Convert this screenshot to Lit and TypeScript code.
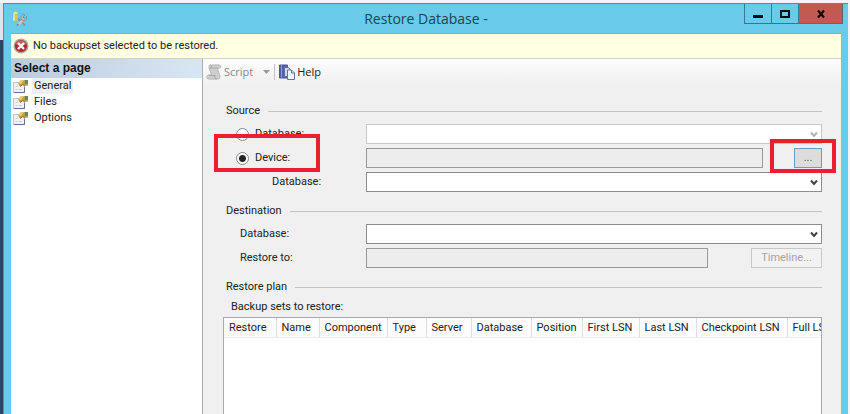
import { LitElement, html, css, svg } from "lit";
import { customElement } from "lit/decorators.js";

const chevron = svg`<path d="M1 1.5 L4 5 L7 1.5" fill="none" stroke="currentColor" stroke-width="2"/>`;

@customElement("combo-box")
class ComboBox extends LitElement {
  static properties = {
    label: { type: String },
    disabled: { type: Boolean, reflect: true },
  };
  declare label: string;
  declare disabled: boolean;

  static styles = css`
    :host { display: grid; height: 20px; color: #444; }
    :host([disabled]) { color: #b4b4b4; }
    select {
      grid-area: 1 / 1; appearance: none; width: 100%; height: 20px; margin: 0;
      padding: 0 20px 0 4px; border: 1px solid #8c8c8c; border-radius: 0;
      background: #fff; font: 11px Roboto, sans-serif;
    }
    select:disabled { border-color: #c8c8c8; opacity: 1; }
    svg { grid-area: 1 / 1; place-self: center end; margin-right: 4px; pointer-events: none; }
  `;

  render() {
    return html`
      <select aria-label=${this.label} ?disabled=${this.disabled}><option></option></select>
      <svg width="8" height="7" viewBox="0 0 8 7" aria-hidden="true">${chevron}</svg>
    `;
  }
}

const appIcon = html`<svg width="16" height="17" viewBox="0 0 16 17" aria-hidden="true">
  <path d="M1 3v7c0 1 5 1 5 0V3z" fill="#f0bd3e"/>
  <path d="M1 3v7c0 .6 1.5 .8 2 .8V3z" fill="#fbe490"/>
  <ellipse cx="3.5" cy="3" rx="2.5" ry="1.2" fill="#fff0a8" stroke="#d9a233" stroke-width=".5"/>
  <path d="M7 3.5h4M11 3.5l2 2M4 12v2" fill="none" stroke="#75cf8b" stroke-width="1"/>
  <path d="M6 8.5l7 7" stroke="#8f9392" stroke-width="2"/>
  <path d="M6 15l6-6" stroke="#c3cccb" stroke-width="2.4"/>
  <path d="M14.5 6.5l-2 2-1.5-1.5 2-2a3 3 0 1 0 1.5 1.5z" fill="#b3bbba" stroke="#777f80" stroke-width=".7"/>
  <path d="M5 15.5l1.5-1.5" stroke="#717b7d" stroke-width="1.4"/>
</svg>`;

const errorIcon = html`<svg width="16" height="16" viewBox="0 0 16 16" aria-hidden="true">
  <circle cx="8" cy="8" r="6.800" fill="#b6262c" stroke="#a9aaa8" stroke-width="1.400"/>
  <path d="M2.600 6a5.800 5.800 0 0 1 10.800 0c-3 2-7.800 2-10.800 0z" fill="#d05a5c"/>
  <path d="M5 5l6 6M11 5l-6 6" stroke="#fff" stroke-width="2.400"/>
</svg>`;

const pageIcon = html`<svg width="16" height="14" viewBox="0 0 16 14" aria-hidden="true">
  <rect x=".5" y="3.500" width="11" height="10" fill="#eef1f9" stroke="#c3c9d8"/>
  <path d="M1 13.500h10.500V8" fill="none" stroke="#66718c"/>
  <path d="M2.500 7.500h2M2.500 10.500h2M6 10.500h3" stroke="#c4cadb"/>
  <path d="M5 4.500l3-3.500h5l2 2v3.500l-4 .5-1.500-1.500L7 7.500z" fill="#c99b3a"/>
  <path d="M5 4.500l3-3.500h3l-3 4z" fill="#e6cd7c"/>
  <path d="M12 1h3v4h-3z" fill="#6f8a45"/>
  <path d="M7 7.500l3-2 2 1.500" fill="none" stroke="#8f7a4c"/>
</svg>`;

const scriptIcon = html`<svg width="16" height="16" viewBox="0 0 16 16" aria-hidden="true">
  <path d="M4 1h9c2 0 2.500 3 .5 3H12c-1 3 2 6 2 8.500 0 1.500-1 2.500-2 2.500H3c-3 0-3-4 0-4h2c1-2-2-5-2-7.500C3 2 3.300 1 4 1z" fill="#cfcfcf" stroke="#b4b4b4"/>
  <path d="M4 1.500c2 0 2 2.500 0 2.500h8M3 11.500h6.500c-1.500 1-.5 3.500 1 3.500" fill="none" stroke="#a6a6a6"/>
</svg>`;

const helpIcon = html`<svg width="16" height="16" viewBox="0 0 16 16" aria-hidden="true">
  <path d="M.5 1h8v13h-8z" fill="#5260a8" stroke="#4c5796"/>
  <path d="M2.500 1v13" stroke="#8f9bd4"/>
  <path d="M5.500 3.500h4l2 2v7h-6z" fill="#cdd8ef" stroke="#63709f"/>
  <path d="M8.500 6h4l3 3v6.500h-7z" fill="#f4f8fd" stroke="#60779b"/>
  <path d="M12.500 6v3h3" fill="#bfcfe2" stroke="#60779b"/>
</svg>`;

const columns: [string, string][] = [
  ["Restore", "w52"], ["Name", "w43"], ["Component", "w68"], ["Type", "w39"],
  ["Server", "w45"], ["Database", "w60"], ["Position", "w51"], ["First LSN", "w57"],
  ["Last LSN", "w57"], ["Checkpoint LSN", "w91"], ["Full LSN", "w60"],
];

@customElement("app-root")
class AppRoot extends LitElement {
  static styles = css`
    * { box-sizing: border-box; }
    :host {
      display: flex; min-height: 100vh; padding: 3px 2px 0 0; background: #f4f4f6;
      font: 11px/16px Roboto, sans-serif; color: #222;
    }
    button, input { font: inherit; color: inherit; margin: 0; border-radius: 0; }
    svg { display: block; flex: none; }
    .backdrop { width: 3px; flex: none; background: linear-gradient(#e2e4ea 37px, #2f4467 37px); }
    .window {
      flex: 1; min-width: 0; display: flex; flex-direction: column; background: #69cbe8;
      border: solid #4f8ea5; border-width: 1px 0 0 1px; padding: 0 7px;
    }
    .titlebar { display: grid; grid-template-columns: 1fr auto 1fr; height: 29px; }
    .app-icon { padding: 6px 0 0 1px; }
    h1 { margin: 0; font: 14px/29px "Open Sans", sans-serif; color: #17455a; }
    .window-buttons { justify-self: end; display: flex; height: 20px; margin-right: -2px; }
    .window-buttons button {
      width: 27px; padding: 0; display: grid; place-items: center; color: #0a0a0a;
      background: none; border: 1px solid #38788e; border-top: 0; border-right: 0;
    }
    .window-buttons .close { width: 45px; background: #c35a52; border-right: 1px solid #5d6468; }
    .client { flex: 1; display: flex; flex-direction: column; background: #f0f0f0; border-top: 1px solid #98a7a8; }
    .alert {
      display: flex; align-items: center; gap: 4px; height: 25px; padding-left: 2px;
      background: #ffffe1; border-bottom: 1px solid #d3d3c5; white-space: nowrap;
    }
    .body { flex: 1; display: flex; }
    aside { width: 192px; flex: none; background: #fff; border-right: 1px solid #a8adb2; }
    h2 {
      margin: 0; padding: 0 3px; font: bold 12px/19px "Liberation Sans", sans-serif; color: #111;
      background: linear-gradient(90deg, #bccbdd, #d8e6f4);
    }
    nav a { display: flex; align-items: center; gap: 3px; height: 16px; padding-left: 2px; color: inherit; text-decoration: none; }
    nav span { padding: 0 2px; }
    nav .current span { background: #efeff3; }
    main { flex: 1; min-width: 0; display: flex; flex-direction: column; }
    .toolbar {
      display: flex; align-items: center; height: 25px; padding-left: 3px;
      background: linear-gradient(#fdfdfd, #f0f0f0); font: 11px/24px "Open Sans", sans-serif;
    }
    .toolbar button { display: flex; align-items: center; gap: 2px; padding: 0; border: 0; background: none; }
    .toolbar button:disabled { color: #8a8a8a; }
    .toolbar .arrow { margin-left: 8px; }
    .divider { width: 1px; height: 16px; margin: 0 4px; background: #c6c6c6; }
    .form { flex: 1; display: flex; flex-direction: column; padding: 19px 19px 0 23px; }
    section { display: grid; grid-template-columns: 140px 1fr; row-gap: 4px; margin-bottom: 11px; }
    h3 {
      grid-column: 1 / -1; display: flex; align-items: center; gap: 8px;
      margin: 0 0 1px; font: inherit;
    }
    h3::after { content: ""; flex: 1; height: 1px; background: #c4c4c4; }
    .label { display: flex; align-items: center; height: 20px; padding-left: 14px; white-space: nowrap; }
    .label.nested { padding-left: 46px; }
    .radio { display: flex; align-items: center; gap: 6px; height: 20px; padding-left: 10px; position: relative; }
    .radio input {
      appearance: none; width: 13px; height: 13px; border: 1px solid #888; border-radius: 50%; background: #fff;
    }
    .radio input:checked { background: radial-gradient(circle, #222 3px, #fff 4px); }
    .line { display: flex; justify-content: space-between; position: relative; }
    .line input { flex: 1; min-width: 0; height: 20px; padding: 0 4px; border: 1px solid #999; background: #ededed; }
    .line button { width: 28px; height: 20px; margin-left: 31px; padding: 0; border: 1px solid #6c9dbc; background: #dcdcdc; color: #555; }
    .line .timeline { width: 71px; margin-left: 43px; border-color: #c8c8c8; background: #f2f2f2; color: #a5a5a5; }
    .mark { position: absolute; border: 4px solid #e8202f; pointer-events: none; }
    .mark-device { inset: -14px 46px -4px -12px; }
    .mark-browse { width: 66px; top: -9px; bottom: -5px; right: -14px; }
    .plan { row-gap: 3px; margin-bottom: 0; }
    .caption { grid-column: 1 / -1; padding-left: 5px; }
    .list {
      flex: 1; margin: 2px 0 0 -3px; overflow: hidden; background: #fff;
      border: 1px solid #a9a9b0; border-bottom: 0;
    }
    .form .list { width: calc(100% + 3px); }
    table { table-layout: fixed; width: 623px; border-collapse: collapse; }
    th {
      height: 19px; padding: 1px 0 0 5px; text-align: left; font-weight: normal; white-space: nowrap;
      border-right: 1px solid #dedede; border-bottom: 1px solid #ededed; background: #fcfcfd;
    }
    .w39 { width: 39px; } .w43 { width: 43px; } .w45 { width: 45px; } .w51 { width: 51px; }
    .w52 { width: 52px; } .w57 { width: 57px; } .w60 { width: 60px; } .w68 { width: 68px; } .w91 { width: 91px; }
  `;

  render() {
    return html`
      <div class="backdrop"></div>
      <div class="window">
        <header class="titlebar">
          <div class="app-icon">${appIcon}</div>
          <h1>Restore Database -</h1>
          <div class="window-buttons">
            <button aria-label="Minimize"><svg width="10" height="10" viewBox="0 0 10 10"><path d="M0 6h10v3H0z" fill="currentColor"/></svg></button>
            <button aria-label="Maximize"><svg width="10" height="10" viewBox="0 0 10 10"><path d="M1 2h8v6H1z" fill="none" stroke="currentColor" stroke-width="2"/></svg></button>
            <button class="close" aria-label="Close"><svg width="10" height="10" viewBox="0 0 10 10"><path d="M2 1.500l6 7M8 1.500l-6 7" stroke="currentColor" stroke-width="2.200"/></svg></button>
          </div>
        </header>
        <div class="client">
          <div class="alert" role="alert">${errorIcon}<span>No backupset selected to be restored.</span></div>
          <div class="body">
            <aside>
              <h2>Select a page</h2>
              <nav>
                <a href="#general" class="current">${pageIcon}<span>General</span></a>
                <a href="#files">${pageIcon}<span>Files</span></a>
                <a href="#options">${pageIcon}<span>Options</span></a>
              </nav>
            </aside>
            <main>
              <div class="toolbar">
                <button disabled>${scriptIcon}Script
                  <svg class="arrow" width="7" height="4" viewBox="0 0 7 4"><path d="M0 0h7L3.500 4z" fill="#999"/></svg>
                </button>
                <span class="divider"></span>
                <button>${helpIcon}Help</button>
              </div>
              <div class="form">
                <section>
                  <h3>Source</h3>
                  <label class="radio"><input type="radio" name="source" />Database:</label>
                  <combo-box label="Source database" disabled></combo-box>
                  <label class="radio"><input type="radio" name="source" checked />Device:<span class="mark mark-device"></span></label>
                  <div class="line">
                    <input type="text" aria-label="Device" readonly />
                    <button aria-label="Browse for device">...</button>
                    <span class="mark mark-browse"></span>
                  </div>
                  <span class="label nested">Database:</span>
                  <combo-box label="Device database"></combo-box>
                </section>
                <section>
                  <h3>Destination</h3>
                  <span class="label">Database:</span>
                  <combo-box label="Destination database"></combo-box>
                  <label class="label" for="restore-to">Restore to:</label>
                  <div class="line">
                    <input id="restore-to" type="text" readonly />
                    <button class="timeline" disabled>Timeline...</button>
                  </div>
                </section>
                <section class="plan">
                  <h3>Restore plan</h3>
                  <span class="caption" id="sets">Backup sets to restore:</span>
                </section>
                <div class="list">
                  <table aria-labelledby="sets">
                    <thead><tr>${columns.map(([name, width]) => html`<th class=${width} scope="col">${name}</th>`)}</tr></thead>
                    <tbody></tbody>
                  </table>
                </div>
              </div>
            </main>
          </div>
        </div>
      </div>
    `;
  }
}
